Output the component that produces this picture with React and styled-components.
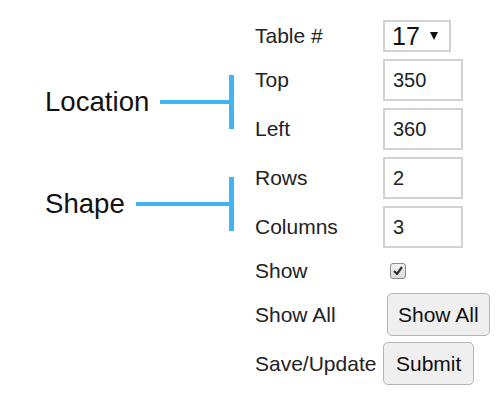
import React from 'react';
import styled, { createGlobalStyle } from 'styled-components';

const GlobalStyle = createGlobalStyle`
  html, body {
    margin: 0;
    padding: 0;
    background: #fff;
  }
  body {
    font-family: 'Liberation Sans', Arial, sans-serif;
    color: #222;
  }
`;

const StyledPage = styled.div`
  width: 500px;
  height: 400px;
  display: flex;
  overflow: hidden;
`;

const Notes = styled.div`
  width: 189px;
  padding: 75px 0 0 45px;
  display: flex;
  flex-direction: column;
  gap: 48px;
`;

const Note = styled.div`
  height: 54px;
  display: flex;
  align-items: center;
  .text {
    font-size: 27.6px;
    color: #111;
    margin-right: 11px;
  }
  .line {
    flex: 1;
    height: 4px;
    background: #42b4f2;
  }
  .bar {
    width: 5px;
    height: 100%;
    background: #42b4f2;
  }
`;

const Form = styled.div`
  margin-left: 21px;
  padding-top: 20px;
  display: flex;
  flex-direction: column;
  gap: 7px;
`;

const Row = styled.div`
  display: grid;
  grid-template-columns: 128px auto;
  align-items: center;
  height: ${(p) => p.h || 42}px;
  font-size: 21px;
`;

const Input = styled.input`
  box-sizing: border-box;
  width: 80px;
  height: 42px;
  border: 2px solid #d2d2d2;
  padding: 0 8px;
  font-family: inherit;
  font-size: 20px;
  color: #222;
  outline: none;
`;

const SelectBox = styled.div`
  position: relative;
  width: 68px;
  height: 32px;
  box-sizing: border-box;
  select {
    appearance: none;
    width: 100%;
    height: 100%;
    border: 2px solid #d2d2d2;
    background: #fff;
    padding: 0 0 0 7px;
    font-family: inherit;
    font-size: 25px;
    color: #111;
    outline: none;
  }
  .arrow {
    position: absolute;
    left: 47px;
    top: 12px;
    width: 0;
    height: 0;
    border-left: 4.5px solid transparent;
    border-right: 4.5px solid transparent;
    border-top: 8px solid #111;
    pointer-events: none;
  }
`;

const Check = styled.span`
  margin-left: 7px;
  width: 14px;
  height: 14px;
  border: 1px solid #8a8a8a;
  border-radius: 3px;
  background: linear-gradient(#f2f2f2, #dadada);
  display: flex;
  align-items: center;
  justify-content: center;
`;

const Button = styled.button`
  box-sizing: border-box;
  margin-left: ${(p) => p.offset || 0}px;
  height: 43px;
  padding: 0 ${(p) => p.pad || 10}px;
  border: 1.5px solid #b5b5b5;
  border-radius: 5px;
  background: #efefef;
  font-family: inherit;
  font-size: 21px;
  color: #111;
  justify-self: start;
`;

function App() {
  return (
    <StyledPage>
      <GlobalStyle />
      <Notes>
        <Note>
          <span className='text'>Location</span>
          <span className='line' />
          <span className='bar' />
        </Note>
        <Note>
          <span className='text'>Shape</span>
          <span className='line' />
          <span className='bar' />
        </Note>
      </Notes>
      <Form>
        <Row h={32}>
          <span>Table #</span>
          <SelectBox>
            <select defaultValue='17'>
              <option value='17'>17</option>
            </select>
            <span className='arrow' />
          </SelectBox>
        </Row>
        <Row>
          <span>Top</span>
          <Input defaultValue='350' />
        </Row>
        <Row>
          <span>Left</span>
          <Input defaultValue='360' />
        </Row>
        <Row>
          <span>Rows</span>
          <Input defaultValue='2' />
        </Row>
        <Row>
          <span>Columns</span>
          <Input defaultValue='3' />
        </Row>
        <Row h={31}>
          <span>Show</span>
          <Check>
            <svg width='10' height='9' viewBox='0 0 10 9'>
              <path d='M1 5 L4 8 L9 1' fill='none' stroke='#333' strokeWidth='2.2' />
            </svg>
          </Check>
        </Row>
        <Row>
          <span>Show All</span>
          <Button offset={4}>Show All</Button>
        </Row>
        <Row>
          <span>Save/Update</span>
          <Button pad={12}>Submit</Button>
        </Row>
      </Form>
    </StyledPage>
  );
}

export default App;
